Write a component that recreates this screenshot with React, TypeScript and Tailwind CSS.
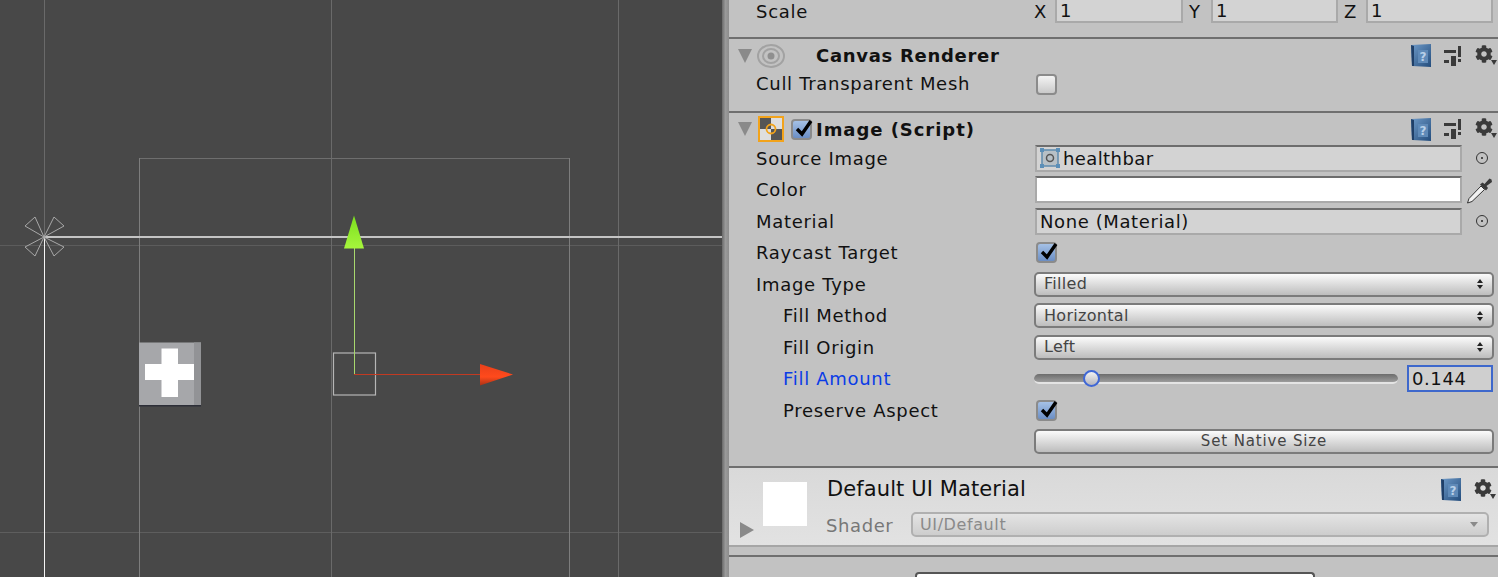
import { type ReactNode } from "react";
import { FaCog } from "react-icons/fa";

const font = { fontFamily: '"DejaVu Sans", sans-serif' };

function SceneGizmos() {
  return (
    <svg viewBox="0 0 722 577" className="absolute inset-0 h-full w-full">
      <defs>
        <linearGradient id="green" x1="0" x2="0" y1="0" y2="1">
          <stop offset="0" stopColor="#7be01e" />
          <stop offset="1" stopColor="#a6f53c" />
        </linearGradient>
        <linearGradient id="red" x1="0" x2="0" y1="0" y2="1">
          <stop offset="0" stopColor="#e8401a" />
          <stop offset="0.6" stopColor="#ff4a1c" />
          <stop offset="1" stopColor="#a83216" />
        </linearGradient>
      </defs>
      <g shapeRendering="crispEdges">
        <rect x="0" y="245" width="722" height="1" fill="#5c5c5c" />
        <rect x="0" y="532" width="722" height="1" fill="#5e5e5e" />
        <rect x="44" y="0" width="1" height="237" fill="#6a6a6a" />
        <rect x="331" y="0" width="1" height="577" fill="#6a6a6a" />
        <rect x="618" y="0" width="1" height="577" fill="#6a6a6a" />
        <rect x="139" y="158" width="431" height="1" fill="#6e6e6e" />
        <rect x="139" y="158" width="1" height="419" fill="#7d7d7d" />
        <rect x="569" y="158" width="1" height="419" fill="#7d7d7d" />
        <rect x="44" y="236" width="678" height="2" fill="#c4c4c4" />
        <rect x="44" y="237" width="1" height="340" fill="#f4f4f4" />
      </g>
      {/* anchor handles */}
      <g fill="none" stroke="#a8a8a8" strokeWidth="1">
        <path d="M44 237 L25 226 L35 217 Z" />
        <path d="M44 237 L54 217 L64 226 Z" />
        <path d="M44 237 L25 247 L35 256 Z" />
        <path d="M44 237 L64 247 L54 256 Z" />
      </g>
      {/* plus sprite */}
      <rect x="139" y="342.500" width="62" height="63" fill="#a6a7aa" />
      <rect x="194" y="342.500" width="7" height="63" fill="#929396" />
      <rect x="139" y="405" width="62" height="1.500" fill="#2d2f38" />
      <path d="M161.500 348.500 H178 V364 H194 V380 H178 V397 H161.500 V380 H145 V364 H161.500 Z" fill="#fff" />
      {/* rect handle */}
      <rect x="333.500" y="353" width="42" height="42" fill="none" stroke="#b6b6b6" strokeWidth="1.200" />
      <path d="M354.500 374.500 V247" stroke="#a8d86e" strokeWidth="1" fill="none" />
      <path d="M354 374.500 H482" stroke="#c23a22" strokeWidth="1" fill="none" />
      <path d="M354 215.500 L344 248.500 H364 Z" fill="url(#green)" />
      <path d="M480 364 L513 374.500 L480 385.500 Z" fill="url(#red)" />
    </svg>
  );
}

function BookIcon() {
  return (
    <svg viewBox="0 0 22 25" className="h-[25px] w-[22px] shrink-0">
      <defs>
        <linearGradient id="book" x1="0" x2="1" y1="0" y2="1">
          <stop offset="0" stopColor="#6f9bc9" />
          <stop offset="1" stopColor="#234c7c" />
        </linearGradient>
      </defs>
      <path d="M1 2 L21 1 V24 L2 23 Z" fill="url(#book)" />
      <path d="M1 2 L4 3 V23 L2 23 Z" fill="#1f3f68" />
      <rect x="8" y="7" width="10" height="13" fill="#5f8ab8" />
      <text x="13" y="18" fontSize="12" fontWeight="700" textAnchor="middle" fill="#b9d0e8" style={font}>
        ?
      </text>
    </svg>
  );
}

function PresetIcon() {
  return (
    <svg viewBox="0 0 18 20" className="h-[20px] w-[18px] shrink-0" shapeRendering="crispEdges" fill="#3a3a3a">
      <rect x="0" y="4" width="12" height="2.500" />
      <rect x="14" y="0" width="3" height="11" />
      <rect x="14" y="13" width="3" height="3" />
      <rect x="0" y="14" width="5" height="2.500" />
      <rect x="7" y="10" width="5" height="10" />
    </svg>
  );
}

function GearMenu() {
  return (
    <span className="relative block h-[22px] w-[22px] shrink-0">
      <FaCog className="absolute left-0 top-0 h-[18px] w-[18px] text-[#3a3a3a]" />
      <span className="absolute bottom-[2px] right-0 h-0 w-0 border-x-[3px] border-t-[5px] border-x-transparent border-t-[#3a3a3a]" />
    </span>
  );
}

function HeaderIcons() {
  return (
    <div className="ml-auto flex items-center">
      <BookIcon />
      <span className="ml-[12px] mr-[13px]">
        <PresetIcon />
      </span>
      <GearMenu />
    </div>
  );
}

function Divider() {
  return <div className="h-[2px] bg-[#6f6f6f]" />;
}

function Foldout() {
  return <span className="h-0 w-0 shrink-0 border-x-[7px] border-t-[14px] border-x-transparent border-t-[#8a8a8a]" />;
}

function CheckBox({ checked }: { checked?: boolean }) {
  return (
    <span
      className={`relative block h-[21px] w-[21px] rounded-[4px] border-2 border-[#8b8b8b] bg-gradient-to-b ${
        checked ? "from-[#a5c1e6] to-[#6b8ec4]" : "from-[#f4f4f4] to-[#c9c9c9]"
      }`}
    >
      {checked && (
        <svg viewBox="0 0 20 20" className="absolute left-[1px] top-[-3px] h-[20px] w-[20px]">
          <path d="M3 11 L8 16 L17 3" fill="none" stroke="#000" strokeWidth="3.400" />
        </svg>
      )}
    </span>
  );
}

function Row({
  label,
  h,
  indent,
  blue,
  nudge,
  children,
}: {
  label?: string;
  h: string;
  indent?: boolean;
  blue?: boolean;
  nudge?: boolean;
  children: ReactNode;
}) {
  return (
    <div className={`flex items-center ${h}`}>
      <div
        className={`w-[305px] shrink-0 text-[18px] leading-none tracking-[0.7px] ${indent ? "pl-[54px]" : "pl-[27px]"} ${
          blue ? "text-[#0a3ce6]" : "text-[#111]"
        } ${nudge ? "pt-[2px]" : ""}`}
      >
        {label}
      </div>
      {children}
    </div>
  );
}

function ObjectField({ children }: { children: ReactNode }) {
  return (
    <div className="flex flex-1 items-center">
      <div className="ml-[1px] flex h-[27px] w-[427px] items-center border-2 border-x-[#a9a9a9] border-b-[#a9a9a9] border-t-[#6d6d6d] bg-[#d3d3d3] text-[18px] tracking-[0.6px] text-[#111]">
        {children}
      </div>
      <span className="ml-[14px] flex h-[12px] w-[12px] items-center justify-center rounded-full border-[1.500px] border-[#333]">
        <span className="h-[2px] w-[2px] rounded-full bg-[#222]" />
      </span>
    </div>
  );
}

function Popup({ label }: { label: string }) {
  return (
    <div className="flex h-[25px] w-[460px] items-center justify-between rounded-[5px] border-2 border-[#7b7b7b] bg-gradient-to-b from-[#fbfbfb] to-[#bdbdbd] pl-[8px] pr-[9px] text-[16px] tracking-[0.3px] text-[#444]">
      <span>{label}</span>
      <span className="flex flex-col gap-[2px]">
        <span className="h-0 w-0 border-x-[3px] border-b-[4px] border-x-transparent border-b-[#222]" />
        <span className="h-0 w-0 border-x-[3px] border-t-[4px] border-x-transparent border-t-[#222]" />
      </span>
    </div>
  );
}

function AxisField({ axis, labelW, w }: { axis: string; labelW: string; w: string }) {
  return (
    <div className="flex items-center">
      <span className={`text-[18px] text-[#111] ${labelW}`}>{axis}</span>
      <div
        className={`h-[24px] border-x-2 border-b-2 border-x-[#a9a9a9] border-b-[#a9a9a9] bg-[#d3d3d3] pl-[3px] text-[18px] leading-[24px] text-[#111] ${w}`}
      >
        1
      </div>
    </div>
  );
}

function SpriteIcon() {
  return (
    <svg viewBox="0 0 20 20" className="mx-[3px] h-[20px] w-[20px] shrink-0">
      <rect x="2" y="2" width="16" height="16" fill="#b7c0c6" stroke="#5f8caf" strokeWidth="1.500" />
      <circle cx="10" cy="10" r="3.500" fill="none" stroke="#555" strokeWidth="1.500" />
      <g fill="#5b8fb8">
        <rect x="0" y="0" width="4" height="4" />
        <rect x="16" y="0" width="4" height="4" />
        <rect x="0" y="16" width="4" height="4" />
        <rect x="16" y="16" width="4" height="4" />
      </g>
    </svg>
  );
}

function Eyedropper() {
  return (
    <svg viewBox="0 0 28 28" className="ml-[3px] h-[28px] w-[28px]">
      <path d="M2.500 27 L4 22.500 L16 10 L19.500 13.500 L7 25.500 Z" fill="#f2f2f2" stroke="#333" strokeWidth="1" />
      <path d="M15 8.500 L21 14.500 L23 12 L21.500 10 L27 6 L26.500 3.500 L24.500 2.500 L19.500 8 L17.500 6.500 Z" fill="#3a3a3a" />
    </svg>
  );
}

function EyeIcon() {
  return (
    <svg viewBox="0 0 28 24" className="h-[24px] w-[28px] shrink-0">
      <ellipse cx="14" cy="12" rx="13" ry="11" fill="none" stroke="#a2a2a2" strokeWidth="2" />
      <ellipse cx="14" cy="12" rx="8" ry="7" fill="none" stroke="#a2a2a2" strokeWidth="2" />
      <circle cx="14" cy="12" r="3.500" fill="#8f8f8f" />
    </svg>
  );
}

function ImageIcon() {
  return (
    <svg viewBox="0 0 26 26" className="h-[26px] w-[26px] shrink-0">
      <rect x="1" y="1" width="24" height="24" fill="#dedede" stroke="#f2a31b" strokeWidth="2" />
      <rect x="2" y="2" width="11" height="11" fill="#555" />
      <rect x="13" y="13" width="11" height="11" fill="#555" />
      <circle cx="13" cy="13" r="4.500" fill="none" stroke="#f2a31b" strokeWidth="1.800" />
    </svg>
  );
}

function Slider() {
  return (
    <div className="flex items-center">
      <div className="relative h-[10px] w-[364px] rounded-full border-b-2 border-b-[#e4e4e4] bg-gradient-to-b from-[#6c6c6c] to-[#9c9c9c]">
        <span className="absolute left-[49px] top-[-4px] h-[17px] w-[17px] rounded-full border-2 border-[#3f67d6] bg-gradient-to-b from-[#f2f2f2] to-[#b5b5bd]" />
      </div>
      <div className="ml-[9px] flex h-[27px] w-[86px] items-center border-2 border-[#3e68cc] bg-[#cfcfcf] pl-[3px] text-[18px] tracking-[0.6px] text-[#111]">
        0.144
      </div>
    </div>
  );
}

function Inspector() {
  return (
    <div className="flex-1 bg-[#c2c2c2]" style={font}>
      <Row label="Scale" h="h-[22px]" nudge>
        <div className="flex gap-[6px]">
          <AxisField axis="X" labelW="w-[21px]" w="w-[128px]" />
          <AxisField axis="Y" labelW="w-[22px]" w="w-[127px]" />
          <AxisField axis="Z" labelW="w-[22px]" w="w-[127px]" />
        </div>
      </Row>
      <div className="h-[15px]" />
      <Divider />

      <div className="flex h-[33px] items-center pl-[9px] pr-[1px]">
        <Foldout />
        <span className="ml-[5px]">
          <EyeIcon />
        </span>
        <span className="ml-[31px] text-[18px] font-bold tracking-[0.7px] text-[#111]">Canvas Renderer</span>
        <HeaderIcons />
      </div>
      <Row label="Cull Transparent Mesh" h="h-[24px]">
        <span className="ml-[2px]">
          <CheckBox />
        </span>
      </Row>
      <div className="h-[15px]" />
      <Divider />

      <div className="flex h-[29px] items-center pl-[9px] pr-[1px] pt-[3px]">
        <Foldout />
        <span className="ml-[6px]">
          <ImageIcon />
        </span>
        <span className="ml-[7px]">
          <CheckBox checked />
        </span>
        <span className="ml-[4px] text-[18px] font-bold tracking-[0.95px] text-[#111]">Image (Script)</span>
        <HeaderIcons />
      </div>
      <Row label="Source Image" h="h-[32px]" nudge>
        <ObjectField>
          <SpriteIcon />
          <span className="tracking-[0.4px]">healthbar</span>
        </ObjectField>
      </Row>
      <Row label="Color" h="h-[31px]">
        <div className="flex flex-1 items-center">
          <div className="ml-[1px] h-[27px] w-[427px] border-2 border-x-[#a9a9a9] border-b-[#a9a9a9] border-t-[#6d6d6d] bg-white" />
          <Eyedropper />
        </div>
      </Row>
      <Row label="Material" h="h-[32px]" nudge>
        <ObjectField>
          <span className="pl-[3px]">None (Material)</span>
        </ObjectField>
      </Row>
      <Row label="Raycast Target" h="h-[31px]">
        <span className="ml-[2px]">
          <CheckBox checked />
        </span>
      </Row>
      <Row label="Image Type" h="h-[32px]" nudge>
        <Popup label="Filled" />
      </Row>
      <Row label="Fill Method" h="h-[31px]" indent>
        <Popup label="Horizontal" />
      </Row>
      <Row label="Fill Origin" h="h-[32px]" indent nudge>
        <Popup label="Left" />
      </Row>
      <Row label="Fill Amount" h="h-[31px]" indent blue>
        <Slider />
      </Row>
      <Row label="Preserve Aspect" h="h-[32px]" indent nudge>
        <span className="ml-[2px]">
          <CheckBox checked />
        </span>
      </Row>
      <Row h="h-[31px]">
        <div className="flex h-[25px] w-[460px] items-center justify-center rounded-[5px] border-2 border-[#7b7b7b] bg-gradient-to-b from-[#fbfbfb] to-[#bdbdbd] text-[15px] tracking-[0.85px] text-[#444]">
          Set Native Size
        </div>
      </Row>
      <div className="h-[9px]" />
      <Divider />

      <div className="flex h-[77px] bg-gradient-to-b from-[#d9d9d9] to-[#e2e2e2] pl-[11px] pr-[2px]">
        <span className="mb-[7px] h-0 w-0 self-end border-y-[8px] border-l-[14px] border-y-transparent border-l-[#8a8a8a]" />
        <div className="ml-[9px] mt-[14px] h-[44px] w-[44px] shrink-0 bg-white" />
        <div className="ml-[20px] flex flex-1 flex-col">
          <div className="flex h-[42px] items-center justify-between pt-[1px]">
            <span className="text-[21px] leading-none tracking-[0.1px] text-[#111]">Default UI Material</span>
            <div className="flex items-center gap-[12px]">
              <BookIcon />
              <GearMenu />
            </div>
          </div>
          <div className="flex items-center">
            <span className="-ml-[1px] w-[85px] pt-[2px] text-[18px] tracking-[0.6px] text-[#777]">Shader</span>
            <div className="flex h-[25px] w-[578px] items-center justify-between rounded-[5px] border-2 border-[#b0b0b0] bg-gradient-to-b from-[#e4e4e4] to-[#cdcdcd] pl-[7px] pr-[9px] text-[16px] tracking-[0.6px] text-[#8a8a8a]">
              <span>UI/Default</span>
              <span className="h-0 w-0 border-x-[4px] border-t-[5px] border-x-transparent border-t-[#8a8a8a]" />
            </div>
          </div>
        </div>
      </div>
      <div className="h-[2px] bg-[#a6a6a6]" />
      <div className="h-[8px]" />
      <Divider />
      <div className="h-[15px]" />
      <div className="ml-[186px] h-[10px] w-[400px] rounded-t-[4px] border-x-2 border-t-2 border-[#555] bg-white" />
    </div>
  );
}

export default function App() {
  return (
    <div className="flex h-[577px] w-[1498px] overflow-hidden">
      <div className="relative w-[722px] shrink-0 bg-[#484848]">
        <SceneGizmos />
      </div>
      <div className="h-full w-[7px] shrink-0 bg-gradient-to-r from-[#6a6a6a] via-[#9a9a9a] to-[#8d8d8d]" />
      <Inspector />
    </div>
  );
}
